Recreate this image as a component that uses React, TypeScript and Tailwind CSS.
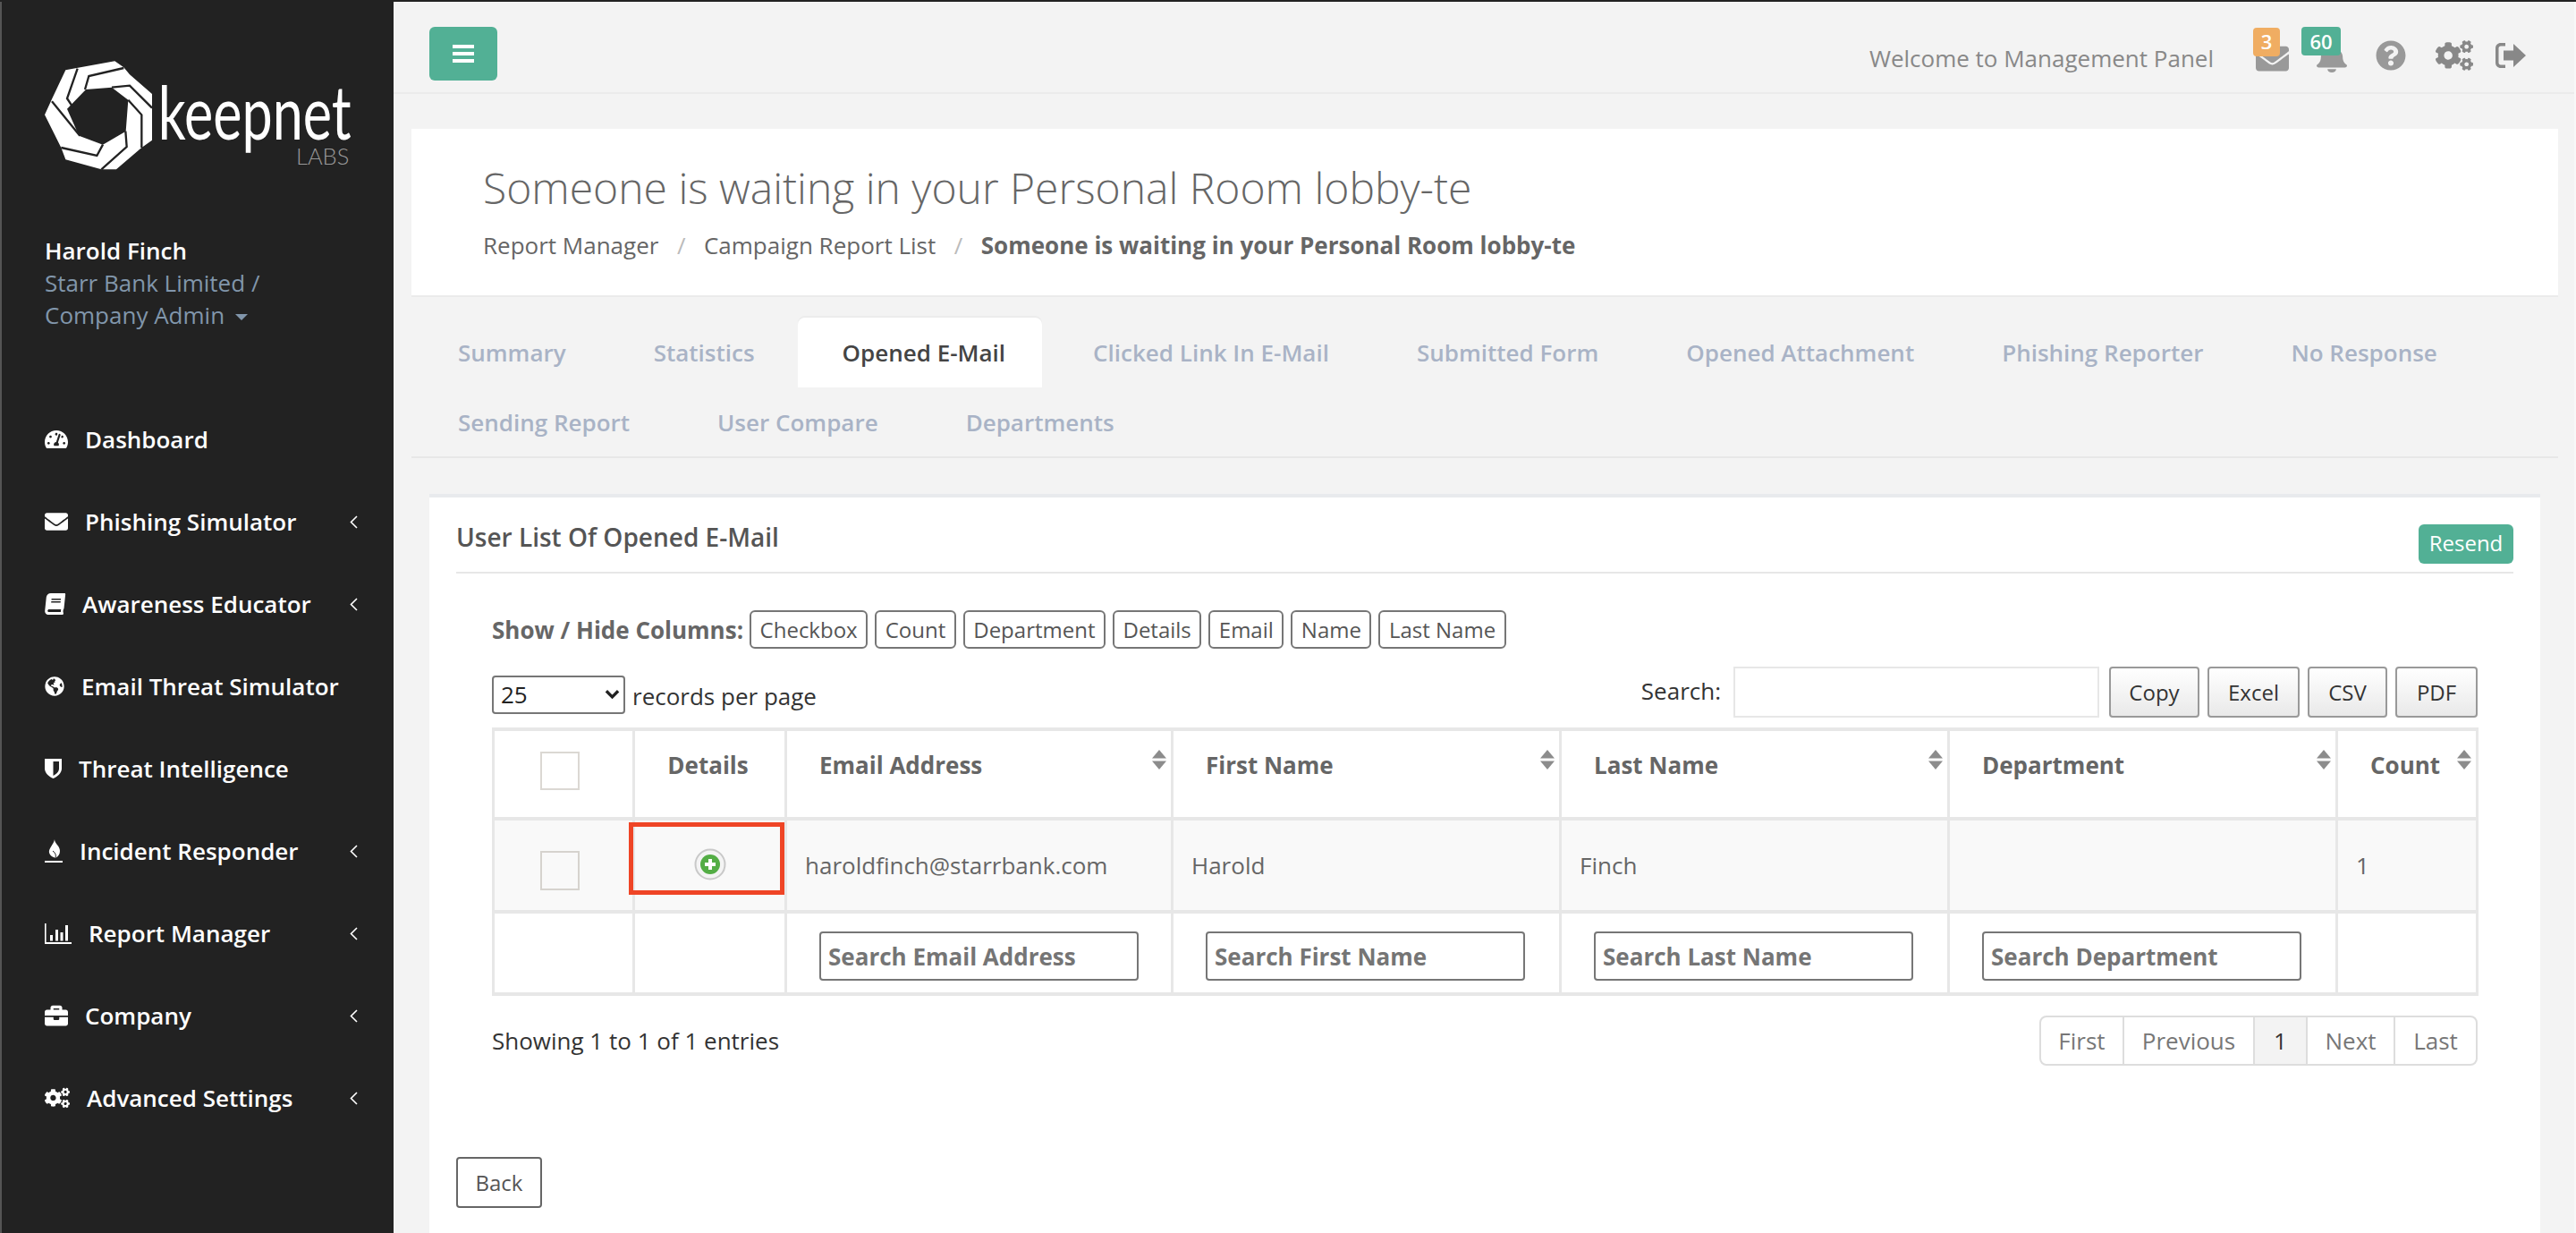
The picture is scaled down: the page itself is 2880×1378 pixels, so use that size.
import React from "react";
import { FaTachometerAlt, FaEnvelope, FaBook, FaGlobeAmericas, FaBriefcase, FaCogs, FaBell, FaQuestionCircle } from "react-icons/fa";

const Shield = ({ className }: { className?: string }) => (
  <svg viewBox="0 0 19 22" className={className} fill="currentColor"><path fillRule="evenodd" d="M0 0h19v11c0 5-5 9-9.5 11C5 20 0 16 0 11V0zm9.5 3v16c3-1.600 6.500-4.400 6.500-8V3H9.500z" /></svg>
);
const Flame = ({ className }: { className?: string }) => (
  <svg viewBox="0 0 20 26" className={className} fill="currentColor"><path d="M11 0c0 5 6 7 6 13 0 4-2 6-5 8-1.500-1-6-2-7-6C4 10 10 6 11 0z" /><path d="M12 21c1-3 0-6-3-8" fill="none" stroke="#222" strokeWidth="1" /><rect x="0" y="24" width="20" height="2" /></svg>
);
const BarChart = ({ className }: { className?: string }) => (
  <svg viewBox="0 0 30 23" className={className} fill="currentColor"><path d="M0 0h1.600v21H30v2H0z" /><rect x="6" y="13" width="3" height="6.500" /><rect x="12" y="7" width="3" height="12.500" /><rect x="17.500" y="10" width="3" height="9.500" /><rect x="23" y="2" width="3" height="17.500" /></svg>
);
const SignOut = ({ className }: { className?: string }) => (
  <svg viewBox="0 0 34 28" className={className} fill="currentColor"><path d="M11 0v3.500H6c-1.500 0-2.500 1-2.500 2.500v16c0 1.500 1 2.500 2.500 2.500h5V28H6c-3.500 0-6-2.500-6-6V6c0-3.500 2.500-6 6-6h5z" /><path d="M20 1l14 13-14 13v-7.500H9v-11h11z" /></svg>
);
const Chevron = () => (
  <svg viewBox="0 0 9 15" className="w-[9px] h-[15px]" fill="none" stroke="currentColor" strokeWidth="1.600"><path d="M8 1L1.500 7.500 8 14" /></svg>
);
const Sort = () => (
  <svg viewBox="0 0 16 22" className="w-[16px] h-[22px] shrink-0 mt-[1px]" fill="#8c8c8c"><path d="M8 0l8 9.500H0z" /><path d="M8 22l8-9.500H0z" /></svg>
);

const Logo = () => (
  <svg viewBox="0 0 1140 480" className="w-[380px] h-[160px]" aria-label="keepnet labs">
    <path fill="#fff" fillRule="evenodd" d="M130 85L295 55 325 76 345 100 420 165V320L385 345 300 418H250L130 385 115 345 60 235 85 180zM198 150L285 143 340 185 332 290 255 335 175 305 135 215z" />
    <g fill="none" stroke="#222" strokeWidth="7">
      <path d="M170 80L135 180 160 218" />
      <path d="M325 78L208 105 195 150" />
      <path d="M285 143L345 137 420 212" />
      <path d="M385 345V235L340 185" />
      <path d="M250 418L335 342 331 290" />
      <path d="M115 345L235 372 255 335" />
      <path d="M84 190L178 305" />
    </g>
    <text x="440" y="318" fontFamily="Lato, sans-serif" fontWeight="400" fontSize="250" fill="#fff" textLength="648" lengthAdjust="spacingAndGlyphs">keepnet</text>
    <text x="903" y="402" fontFamily="Lato, sans-serif" fontWeight="300" fontSize="76" fill="#999" textLength="178" lengthAdjust="spacingAndGlyphs">LABS</text>
  </svg>
);

const nav: [string, React.ReactNode, boolean][] = [
  ["Dashboard", <FaTachometerAlt className="w-[26px] h-[24px]" />, false],
  ["Phishing Simulator", <FaEnvelope className="w-[26px] h-[26px]" />, true],
  ["Awareness Educator", <FaBook className="w-[23px] h-[24px] -skew-x-6" />, true],
  ["Email Threat Simulator", <FaGlobeAmericas className="w-[22px] h-[22px]" />, false],
  ["Threat Intelligence", <Shield className="w-[19px] h-[22px]" />, false],
  ["Incident Responder", <Flame className="w-[20px] h-[26px]" />, true],
  ["Report Manager", <BarChart className="w-[30px] h-[23px]" />, true],
  ["Company", <FaBriefcase className="w-[26px] h-[26px]" />, true],
  ["Advanced Settings", <FaCogs className="w-[28px] h-[26px]" />, true],
];

const tabs1 = ["Summary", "Statistics", "Opened E-Mail", "Clicked Link In E-Mail", "Submitted Form", "Opened Attachment", "Phishing Reporter", "No Response"];
const tabs2 = ["Sending Report", "User Compare", "Departments"];
const cols = ["Checkbox", "Count", "Department", "Details", "Email", "Name", "Last Name"];
const cell = "border-x-[3px] border-y-4 border-[#e7e7e7]";

const Tab = ({ label }: { label: string }) => {
  const active = label === "Opened E-Mail";
  return (
    <div className={`h-[78px] flex items-center text-[26px] font-semibold whitespace-nowrap rounded-t-[8px] ${active ? "-ml-[1px] pl-[50px] pr-[41px] mr-[8px] bg-white text-[#444] shadow-[0_-2px_0_#ececec]" : "px-[49px] text-[#a9b3c6]"}`}>{label}</div>
  );
};

const HeadCell = ({ label }: { label: string }) => (
  <th className={`${cell} align-top pt-[20px] pl-[36px] pr-[5px]`}>
    <div className="flex justify-between items-start text-[26px] font-bold text-[#666] leading-[36px] text-left"><span>{label}</span><Sort /></div>
  </th>
);

const SearchCell = ({ label }: { label: string }) => (
  <td className={`${cell} align-top pt-[20px] pl-[36px]`}>
    <input readOnly placeholder={label} className="block w-[357px] h-[55px] border-2 border-[#767676] rounded-[4px] bg-white pl-[8px] text-[26px] font-bold placeholder:text-[#757575] outline-none" />
  </td>
);

export default function App() {
  return (
    <div className="h-[1378px] w-[2880px] overflow-hidden flex border-t-2 border-[#222] bg-[#f3f3f3] font-['Open_Sans',sans-serif] text-[26px] text-[#666]">
      <aside className="w-[440px] shrink-0 bg-[#222] border-l-2 border-[#555] flex flex-col pl-[48px] pr-[40px] text-white">
        <div className="-ml-[20px] mt-[48px] h-[160px]"><Logo /></div>
        <div className="mt-[52px] leading-[36px] text-[#8196ab]">
          <div className="text-white font-semibold">Harold Finch</div>
          <div>Starr Bank Limited /</div>
          <div className="flex items-center">Company Admin<span className="ml-[12px] mt-[4px] border-x-[7px] border-t-[7px] border-x-transparent border-t-[#8196ab]" /></div>
        </div>
        <nav className="mt-[75px] flex flex-col">
          {nav.map(([label, icon, more]) => (
            <div key={label} className="h-[92px] flex items-center font-semibold">
              <span className="mr-[19px] flex items-center">{icon}</span>
              <span className="flex-1 whitespace-nowrap">{label}</span>
              {more && <Chevron />}
            </div>
          ))}
        </nav>
      </aside>
      <main className="flex-1 flex flex-col min-w-0 border-r-2 border-[#f8f8f8]">
        <header className="h-[103px] shrink-0 border-b-2 border-[#ebebeb] flex items-start pt-[28px] pl-[40px] pr-[54px]">
          <button className="w-[76px] h-[60px] rounded-[6px] bg-[#52b095] flex flex-col items-center justify-center gap-[4px]">
            <span className="w-[24px] h-[4px] bg-white" /><span className="w-[24px] h-[4px] bg-white" /><span className="w-[24px] h-[4px] bg-white" />
          </button>
          <div className="ml-auto flex items-center h-[70px] text-[#888]">
            <span>Welcome to Management Panel</span>
            <div className="relative ml-[47px] text-[#999]">
              <FaEnvelope className="block w-[37px] h-[37px]" />
              <span className="absolute -left-[3px] -top-[16px] w-[30px] h-[32px] rounded-[4px] bg-[#f0ad62] text-white text-[22px] font-semibold flex items-center justify-center">3</span>
            </div>
            <div className="relative ml-[31px] mt-[2px] text-[#999]">
              <FaBell className="block w-[34px] h-[30px]" preserveAspectRatio="none" />
              <span className="absolute -left-[17px] -top-[21px] w-[44px] h-[32px] rounded-[4px] bg-[#52b095] text-white text-[22px] font-semibold flex items-center justify-center">60</span>
            </div>
            <FaQuestionCircle className="w-[34px] h-[34px] ml-[32px] -mt-[6px] text-[#999]" />
            <FaCogs className="w-[42px] h-[38px] ml-[33px] -mt-[6px] text-[#888]" />
            <SignOut className="w-[34px] h-[28px] ml-[25px] -mt-[6px] text-[#888]" />
          </div>
        </header>
        <section className="ml-[20px] mr-[18px] mt-[39px] h-[188px] shrink-0 bg-white border-b-2 border-[#ebebeb] pl-[80px] pt-[32px]">
          <h1 className="text-[48px] leading-[68px] font-light text-[#666] whitespace-nowrap">Someone is waiting in your Personal Room lobby-te</h1>
          <div className="mt-[12px] flex items-center leading-[36px] whitespace-nowrap">
            <span>Report Manager</span><span className="mx-[20.5px] text-[#bbb]">/</span>
            <span>Campaign Report List</span><span className="mx-[20.5px] text-[#bbb]">/</span>
            <b className="font-bold">Someone is waiting in your Personal Room lobby-te</b>
          </div>
        </section>
        <div className="ml-[20px] mr-[18px] mt-[23px] h-[157px] shrink-0 border-b-2 border-[#e7e7e7] pl-[3px]">
          <div className="flex">{tabs1.map(t => <Tab key={t} label={t} />)}</div>
          <div className="flex">{tabs2.map(t => <Tab key={t} label={t} />)}</div>
        </div>
        <section className="ml-[40px] mr-[38px] mt-[40px] flex-1 bg-white border-t-4 border-[#e8eaed] px-[30px]">
          <div className="h-[85px] border-b-2 border-[#e7e7e7] flex items-start justify-between">
            <h2 className="mt-[24px] text-[28px] leading-[40px] font-semibold text-[#555]">User List Of Opened E-Mail</h2>
            <button className="mt-[30px] w-[106px] h-[44px] rounded-[6px] bg-[#52b095] text-white text-[24px] leading-[40px] pb-[3px]">Resend</button>
          </div>
          <div className="pl-[40px] pr-[40px]">
            <div className="mt-[41px] h-[43px] flex items-center gap-[8px]">
              <b className="font-bold mr-[-1px] mt-[2px]">Show / Hide Columns:</b>
              {cols.map(c => <button key={c} className="h-[43px] px-[9.5px] border-2 border-[#767676] rounded-[6px] bg-white text-[24px] text-[#555]">{c}</button>)}
            </div>
            <div className="mt-[20px] h-[58px] flex items-start text-[#333]">
              <div className="relative mt-[10px]">
                <select className="appearance-none block w-[149px] h-[43px] border-2 border-[#767676] rounded-[4px] bg-white pl-[8px] text-[26px] text-[#222]"><option>25</option></select>
                <svg viewBox="0 0 18 12" className="absolute right-[6px] top-[15px] w-[17px] h-[12px]" fill="none" stroke="#222" strokeWidth="3.500"><path d="M2 2l7 7 7-7" /></svg>
              </div>
              <span className="ml-[8px] mt-[14px]">records per page</span>
              <span className="ml-auto mt-[8px]">Search:</span>
              <input readOnly className="ml-[14px] w-[409px] h-[57px] border-2 border-[#e7e7e7] bg-white outline-none" />
              <div className="ml-[11px] flex gap-[9px]">
                {["Copy", "Excel", "CSV", "PDF"].map((b, i) => (
                  <button key={b} className={`h-[57px] border-2 border-[#999] rounded-[4px] bg-gradient-to-b from-white to-[#e9e9e9] text-[24px] text-[#333] ${["w-[101px]", "w-[103px]", "w-[89px]", "w-[92px]"][i]}`}>{b}</button>
                ))}
              </div>
            </div>
            <table className="mt-[10px] w-[2218px] table-fixed border-collapse">
              <colgroup>
                <col className="w-[157px]" /><col className="w-[170px]" /><col className="w-[432px]" /><col className="w-[434px]" /><col className="w-[434px]" /><col className="w-[434px]" /><col className="w-[157px]" />
              </colgroup>
              <thead>
                <tr className="h-[100px]">
                  <th className={`${cell} align-top pt-[23px] pr-[8px]`}><input type="checkbox" readOnly className="appearance-none block mx-auto w-[44px] h-[43px] border-2 border-[#dbd8d3] bg-white" /></th>
                  <th className={`${cell} align-top pt-[20px] pr-[4px] text-[26px] font-bold text-[#666] leading-[36px]`}>Details</th>
                  <HeadCell label="Email Address" />
                  <HeadCell label="First Name" />
                  <HeadCell label="Last Name" />
                  <HeadCell label="Department" />
                  <HeadCell label="Count" />
                </tr>
              </thead>
              <tbody>
                <tr className="h-[104px] bg-[#f9f9f9]">
                  <td className={`${cell} pr-[8px]`}><input type="checkbox" readOnly className="appearance-none block mx-auto mt-[12px] w-[44px] h-[44px] border-2 border-[#d6d3ce] bg-transparent" /></td>
                  <td className={`${cell} relative`}>
                    <svg viewBox="0 0 36 36" className="block mx-auto -mt-[3px] w-[36px] h-[36px]">
                      <circle cx="18" cy="18" r="16.500" fill="#f4f4f4" stroke="#c9c9c9" strokeWidth="2" />
                      <circle cx="18" cy="18" r="11" fill="#53ad45" />
                      <path d="M18 12v12M12 18h12" stroke="#fff" strokeWidth="4" />
                    </svg>
                    <div className="absolute -left-[7px] top-[2px] w-[174px] h-[81px] border-[5px] border-[#ef4526]" />
                  </td>
                  <td className={`${cell} pl-[20px]`}>haroldfinch@starrbank.com</td>
                  <td className={`${cell} pl-[20px]`}>Harold</td>
                  <td className={`${cell} pl-[20px]`}>Finch</td>
                  <td className={cell}></td>
                  <td className={`${cell} pl-[20px]`}>1</td>
                </tr>
                <tr className="h-[92px]">
                  <td className={cell}></td>
                  <td className={cell}></td>
                  <SearchCell label="Search Email Address" />
                  <SearchCell label="Search First Name" />
                  <SearchCell label="Search Last Name" />
                  <SearchCell label="Search Department" />
                  <td className={cell}></td>
                </tr>
              </tbody>
            </table>
            <div className="mt-[22px] flex items-start justify-between">
              <span className="mt-[9px] text-[#333]">Showing 1 to 1 of 1 entries</span>
              <div className="h-[56px] flex border-2 border-[#ddd] rounded-[8px] overflow-hidden text-[#777]">
                <span className="w-[91px] flex items-center justify-center">First</span>
                <span className="w-[146px] flex items-center justify-center border-l-2 border-[#ddd]">Previous</span>
                <span className="w-[59px] flex items-center justify-center border-l-2 border-[#ddd] bg-[#f3f3f3] text-[#333]">1</span>
                <span className="w-[98px] flex items-center justify-center border-l-2 border-[#ddd]">Next</span>
                <span className="w-[92px] flex items-center justify-center border-l-2 border-[#ddd]">Last</span>
              </div>
            </div>
          </div>
          <button className="mt-[102px] w-[96px] h-[57px] border-2 border-[#666] rounded-[4px] bg-white text-[24px] text-[#555]">Back</button>
        </section>
      </main>
    </div>
  );
}
